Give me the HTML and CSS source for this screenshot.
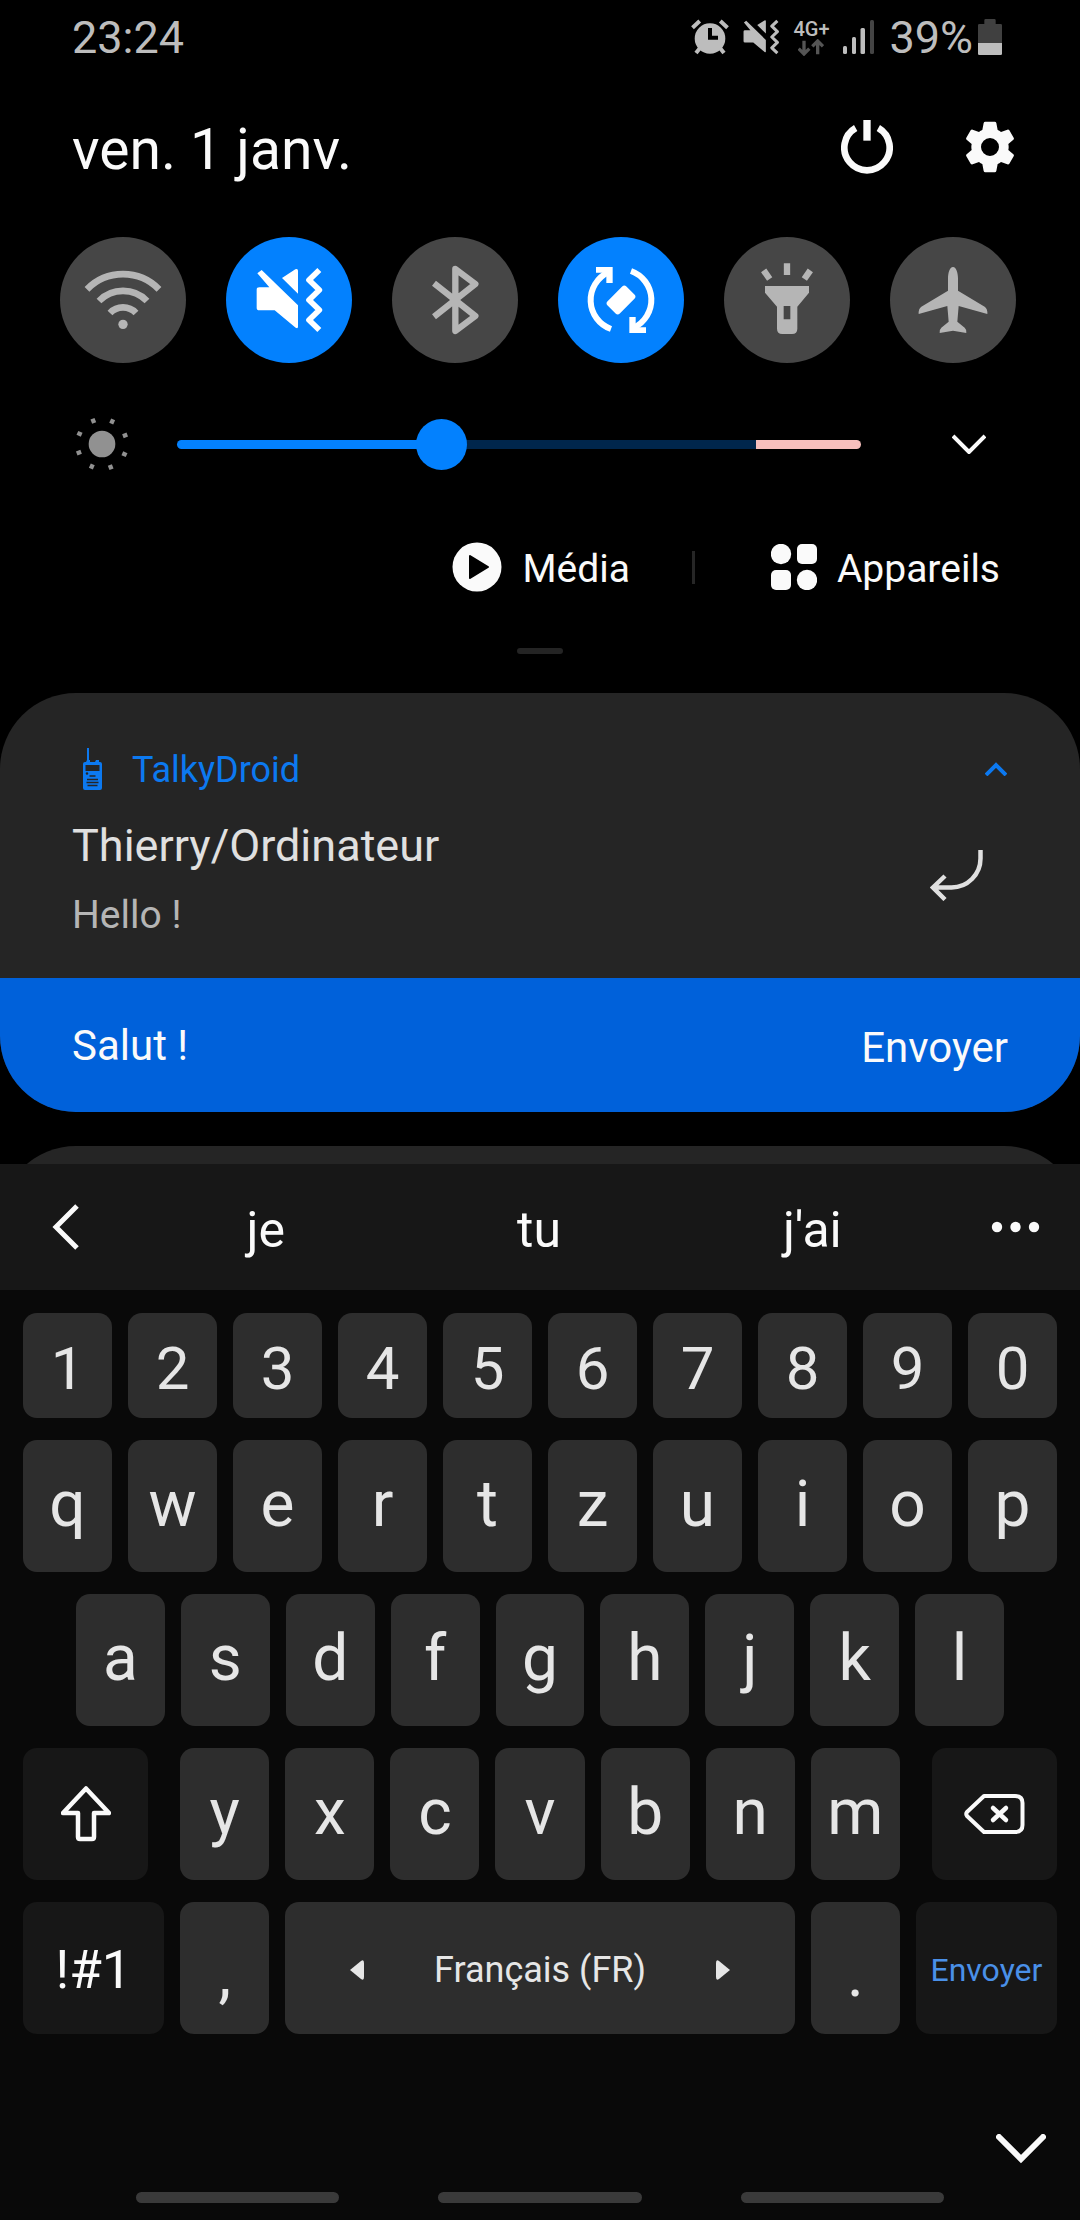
FILE: index.html
```html
<!DOCTYPE html>
<html lang="fr">
<head>
<meta charset="utf-8">
<meta name="viewport" content="width=device-width, initial-scale=1">
<title>Notifications</title>
<link rel="stylesheet" href="styles.css">
</head>
<body>
<header class="status-bar">
  <time class="clock">23:24</time>
  <div class="status-icons">
    <svg width="38" height="36" viewBox="0 0 38 36" fill="none" stroke="currentColor" stroke-width="4" aria-hidden="true"><circle cx="19" cy="19.5" r="15.3" fill="currentColor" stroke="none"/><path d="M1.5 8.7 8.7 2M29.3 2l7.2 6.7M5 34l4-5M33 34l-4-5"/><path d="M19 9v9.700h8" stroke="#000"/></svg>
    <svg width="36" height="36" viewBox="0 0 200 200" aria-hidden="true"><use href="#mute"/></svg>
    <div class="network">
      <span>4G+</span>
      <svg width="26" height="17" viewBox="0 0 78 51" fill="none" stroke="#555" stroke-width="10" aria-hidden="true"><path d="M18 5v40M2 29l16 16 16-16M59 46V7M43 22 59 6l16 16"/></svg>
    </div>
    <svg width="32" height="34" viewBox="0 0 32 34" fill="currentColor" aria-hidden="true"><rect y="26" width="4" height="8" rx="1.500"/><rect x="9" y="17" width="4" height="17" rx="1.500"/><rect x="17.500" y="8" width="4.500" height="26" rx="1.500"/><rect x="27" width="4" height="34" rx="1.500" fill="#444"/></svg>
    <div class="battery">
      <span>39%</span>
      <svg width="24" height="36" viewBox="0 0 72 108" aria-hidden="true"><path d="M19 15V4q0-4 4-4h26q4 0 4 4v11h15q4 0 4 4v53H0V19q0-4 4-4z" fill="#404040"/><path d="M0 72h72v32q0 4-4 4H4q-4 0-4-4z" fill="currentColor"/></svg>
    </div>
  </div>
</header>

<main>
  <section class="panel">
    <div class="panel-head">
      <h1>ven. 1 janv.</h1>
      <button type="button" aria-label="Éteindre"><svg width="52" height="54" viewBox="0 0 156 162"><path d="M44 24A68 68 0 1 0 112 24" fill="none" stroke="currentColor" stroke-width="20"/><path d="M67 0h22v62H67z" fill="currentColor"/></svg></button>
      <button type="button" aria-label="Paramètres"><svg width="48" height="52" viewBox="0 0 144 152"><path fill="currentColor" fill-rule="evenodd" d="M58 0H86Q90 0 91 4L95 25Q100 27 105 31L124 24Q128 23 130 26L143 48Q145 52 142 54L127 67Q128 72 128 76Q128 80 127 85L142 98Q145 100 143 104L130 126Q128 129 124 128L105 121Q100 125 95 127L91 148Q90 152 86 152H58Q54 152 53 148L49 127Q44 125 39 121L20 128Q16 129 14 126L1 104Q-1 100 2 98L17 85Q16 80 16 76Q16 72 17 67L2 54Q-1 52 1 48L14 26Q16 23 20 24L39 31Q44 27 49 25L53 4Q54 0 58 0ZM72 49A27 27 0 1 0 72 103A27 27 0 1 0 72 49Z"/></svg></button>
    </div>

    <div class="toggles">
      <button type="button" class="toggle" aria-label="Wi-Fi" aria-pressed="false"><svg viewBox="0 0 240 240" fill="none" stroke="currentColor" stroke-width="20"><path d="M12 88A151 151 0 0 1 228 88M48 123A101 101 0 0 1 192 123M81 159A54 54 0 0 1 159 159"/><circle cx="120" cy="193" r="14" fill="currentColor" stroke="none"/></svg></button>
      <button type="button" class="toggle" aria-label="Vibreur" aria-pressed="true"><svg viewBox="-20 -20 240 240"><g id="mute"><path fill="currentColor" d="M18 10 127 116V180Q127 187 120 183L57 131H11Q3 131 3 123V69Q3 62 11 62H41L5 20ZM79 34 119 8Q127 5 127 12V81Z"/><path fill="none" stroke="currentColor" stroke-width="17" stroke-linejoin="round" d="M191 10 160 40 191 70 160 100 191 130 160 160 191 190"/></g></svg></button>
      <button type="button" class="toggle" aria-label="Bluetooth" aria-pressed="false"><svg viewBox="0 0 240 240" fill="none" stroke="currentColor" stroke-width="19" stroke-linejoin="round"><path d="M57 70 181 168 121 213V27L181 72 57 170"/></svg></button>
      <button type="button" class="toggle" aria-label="Rotation auto" aria-pressed="true"><svg viewBox="0 0 240 240"><g id="turn"><path d="M90 207A92 92 0 0 1 82 37" fill="none" stroke="currentColor" stroke-width="18"/><path d="M45 21h50v48H76V38H45z" fill="currentColor"/></g><use href="#turn" transform="rotate(180 120 120)"/><rect x="80" y="94" width="80" height="52" rx="9" fill="currentColor" transform="rotate(-45 120 120)"/></svg></button>
      <button type="button" class="toggle" aria-label="Lampe torche" aria-pressed="false"><svg viewBox="0 0 240 240" fill="currentColor"><path fill-rule="evenodd" d="M54 78H186V98L151 140V206Q151 222 135 222H106Q90 222 90 206V140L54 98ZM110 138V178H130V138Z"/><path d="M120 10V45M50 31 68 57M190 31 172 57" stroke="currentColor" stroke-width="19"/></svg></button>
      <button type="button" class="toggle" aria-label="Mode avion" aria-pressed="false"><svg viewBox="0 0 240 240" fill="currentColor"><path d="M120 21C110 21 105 40 105 55V92L25 140Q16 146 17 162L103 138 107 185 85 203Q79 208 80 219L120 212 160 219Q161 208 155 203L133 185 137 138 223 162Q224 146 215 140L135 92V55C135 40 130 21 120 21Z"/></svg></button>
    </div>

    <div class="brightness">
      <svg class="sun" width="54" height="54" viewBox="-81 -81 162 162" fill="currentColor" aria-hidden="true"><circle r="40"/><g id="rays"><path id="ray" d="M-6-81H7V-67H-6z" transform="rotate(24)"/><use href="#ray" transform="rotate(45)"/><use href="#ray" transform="rotate(90)"/><use href="#ray" transform="rotate(135)"/></g><use href="#rays" transform="rotate(180)"/></svg>
      <input type="range" min="0" max="1000" value="378" aria-label="Luminosité">
      <button type="button" aria-label="Options de luminosité"><svg width="34" height="20" viewBox="0 0 34 20" fill="none" stroke="currentColor" stroke-width="4"><path d="M1 2 17 18 33 2"/></svg></button>
    </div>

    <div class="shortcuts">
      <button type="button" class="shortcut"><svg width="50" height="50" viewBox="0 0 50 50" aria-hidden="true"><circle cx="25" cy="25" r="24.500" fill="currentColor"/><path d="M18 14 36 25 18 36z" stroke="#000" stroke-width="2" stroke-linejoin="round"/></svg><span>Média</span></button>
      <span class="divider"></span>
      <button type="button" class="shortcut"><svg width="46" height="46" viewBox="0 0 46 46" fill="currentColor" aria-hidden="true"><circle cx="10" cy="10" r="10.200"/><rect x="26" width="20" height="20" rx="5"/><rect y="26" width="20" height="20" rx="5"/><circle cx="36" cy="36" r="10.200"/></svg><span>Appareils</span></button>
    </div>
    <div class="handle"></div>
  </section>

  <article class="card">
    <div class="card-body">
      <div class="card-app">
        <svg width="20" height="42" viewBox="0 0 20 42" fill="currentColor" aria-hidden="true"><path d="M4 0h2v12h1v2h5l1-2h3v2h1q2 0 2 2v24q0 2-2 2H2q-2 0-2-2V16q0-2 2-2h1l1-2z"/><path d="M2.500 17h14v6h-14z" fill="#252525"/><circle cx="4" cy="25.500" r="1.200" fill="#252525"/><path d="M6.500 28h6M4 31.500h11M3.500 34.500h12M4.500 37.500h10" fill="none" stroke="#252525" stroke-width="1.500"/></svg>
        <span>TalkyDroid</span>
        <button type="button" aria-label="Réduire"><svg width="22" height="14" viewBox="0 0 22 14" fill="none" stroke="currentColor" stroke-width="4"><path d="M1 13 11 3 21 13"/></svg></button>
      </div>
      <div class="message">
        <div>
          <h2>Thierry/Ordinateur</h2>
          <p>Hello !</p>
        </div>
        <button type="button" aria-label="Répondre"><svg width="53" height="51" viewBox="0 0 53 51" fill="none" stroke="currentColor" stroke-width="4.500"><path d="M50.500 0V8.500A29 29 0 0 1 21.500 37.500H4M15 26 3 37.500 15 49.500"/></svg></button>
      </div>
    </div>
    <form class="reply">
      <input type="text" value="Salut !" aria-label="Réponse">
      <button type="button">Envoyer</button>
    </form>
  </article>
  <div class="next"><article class="next-card"></article></div>
</main>

<section class="keyboard">
  <div class="suggestions">
    <button type="button" aria-label="Retour"><svg width="27" height="46" viewBox="0 0 27 46" fill="none" stroke="currentColor" stroke-width="5"><path d="M25 2 4 23 25 44"/></svg></button>
    <div class="words">
      <button type="button">je</button>
      <button type="button">tu</button>
      <button type="button">j'ai</button>
    </div>
    <button type="button" aria-label="Plus"><svg width="49" height="12" viewBox="0 0 49 12" fill="currentColor"><circle cx="6" cy="6" r="5.200"/><circle cx="24.500" cy="6" r="5.200"/><circle cx="43" cy="6" r="5.200"/></svg></button>
  </div>

  <div class="keys">
    <div class="row digits">
      <button type="button">1</button><button type="button">2</button><button type="button">3</button><button type="button">4</button><button type="button">5</button><button type="button">6</button><button type="button">7</button><button type="button">8</button><button type="button">9</button><button type="button">0</button>
    </div>
    <div class="row">
      <button type="button">q</button><button type="button">w</button><button type="button">e</button><button type="button">r</button><button type="button">t</button><button type="button">z</button><button type="button">u</button><button type="button">i</button><button type="button">o</button><button type="button">p</button>
    </div>
    <div class="row inset">
      <button type="button">a</button><button type="button">s</button><button type="button">d</button><button type="button">f</button><button type="button">g</button><button type="button">h</button><button type="button">j</button><button type="button">k</button><button type="button">l</button>
    </div>
    <div class="row">
      <button type="button" class="fn shift" aria-label="Majuscule"><svg width="50" height="56" viewBox="0 0 50 56" fill="none" stroke="currentColor" stroke-width="4.500" stroke-linejoin="round"><path d="M25 2.500 48 27H33V51Q33 53 31 53H19Q17 53 17 51V27H2Z"/></svg></button>
      <button type="button">y</button><button type="button">x</button><button type="button">c</button><button type="button">v</button><button type="button">b</button><button type="button">n</button><button type="button">m</button>
      <button type="button" class="fn delete" aria-label="Effacer"><svg width="61" height="40" viewBox="0 0 61 40" fill="none" stroke="currentColor" stroke-width="4"><path d="M20 2H51Q58.500 2 58.500 9V31Q58.500 38 51 38H20L3 22Q1.500 20 3 18Z" stroke-linejoin="round"/><path d="M29 14 42 26M42 14 29 26" stroke-width="4.500" stroke-linecap="round"/></svg></button>
    </div>
    <div class="row">
      <button type="button" class="fn wide symbols">!#1</button>
      <button type="button" class="point">,</button>
      <button type="button" class="space"><svg width="14" height="20" viewBox="0 0 14 20" fill="currentColor" aria-hidden="true"><path d="M0 10 11 1Q14-1 14 3V17Q14 21 11 19z"/></svg><span>Français (FR)</span><svg width="14" height="20" viewBox="0 0 14 20" fill="currentColor" aria-hidden="true"><path d="M14 10 3 1Q0-1 0 3V17Q0 21 3 19z"/></svg></button>
      <button type="button" class="point">.</button>
      <button type="button" class="fn wide send">Envoyer</button>
    </div>
  </div>

  <button type="button" class="hide" aria-label="Masquer le clavier"><svg width="50" height="30" viewBox="0 0 50 30" fill="none" stroke="currentColor" stroke-width="6" stroke-linecap="round"><path d="M3 3 25 25 47 3"/></svg></button>
  <nav class="nav-bar">
    <button type="button" aria-label="Applications récentes"></button>
    <button type="button" aria-label="Accueil"></button>
    <button type="button" aria-label="Précédent"></button>
  </nav>
</section>
</body>
</html>
```

FILE: styles.css
```css
* {
  box-sizing: border-box;
}

body {
  margin: 0;
  min-height: 100vh;
  display: flex;
  flex-direction: column;
  background: #000;
  color: #fafafa;
  font-family: Roboto, sans-serif;
}

h1,
h2,
p {
  margin: 0;
  font-weight: 400;
}

button,
input {
  margin: 0;
  padding: 0;
  border: 0;
  background: none;
  color: inherit;
  font: inherit;
}

svg {
  display: block;
  flex: none;
}

/* Status bar */
.status-bar {
  display: flex;
  justify-content: space-between;
  align-items: center;
  height: 74px;
  padding: 0 78px 0 72px;
  color: #bdbdbd;
  font-size: 45px;
}

.status-icons {
  display: flex;
  align-items: center;
  gap: 14px;
}

.network {
  display: flex;
  flex-direction: column;
  align-items: center;
  width: 36px;
  font-size: 20px;
  font-weight: 500;
  line-height: 20px;
}

.battery {
  display: flex;
  align-items: center;
  gap: 5px;
}

/* Quick settings */
.panel {
  display: flex;
  flex-direction: column;
}

.panel-head {
  display: flex;
  align-items: center;
  gap: 73px;
  height: 72px;
  margin-top: 37px;
  padding: 0 66px 0 72px;
}

.panel-head h1 {
  flex: 1;
  padding-top: 4px;
  font-size: 57px;
}

.toggles {
  display: flex;
  justify-content: space-between;
  margin-top: 54px;
  padding: 0 64px 0 60px;
}

.toggle {
  display: grid;
  place-items: center;
  width: 126px;
  height: 126px;
  border-radius: 50%;
  background: #464646;
  color: #b5b5b5;
}

.toggle svg {
  width: 80px;
  height: 80px;
}

.toggle[aria-pressed="true"] {
  background: #0381fe;
  color: #fff;
}

.brightness {
  display: flex;
  align-items: center;
  height: 54px;
  margin-top: 54px;
  padding: 0 94px 0 75px;
}

.sun {
  color: #919191;
}

.brightness input {
  flex: 1;
  min-width: 0;
  height: 51px;
  margin: 0 91px 0 48px;
  appearance: none;
}

.brightness input::-webkit-slider-runnable-track {
  height: 9px;
  border-radius: 5px;
  background: linear-gradient(to right, #0381fe 38%, #00264c 38%, #00264c 84.6%, #f7bfbd 84.6%);
}

.brightness input::-webkit-slider-thumb {
  appearance: none;
  width: 51px;
  height: 51px;
  margin-top: -21px;
  border-radius: 50%;
  background: #0381fe;
}

.shortcuts {
  display: flex;
  justify-content: flex-end;
  align-items: center;
  height: 50px;
  margin-top: 71px;
  padding-right: 80px;
}

.shortcut {
  display: flex;
  align-items: center;
  gap: 20px;
  font-size: 39px;
}

.shortcut span {
  padding-top: 3px;
}

.divider {
  width: 3px;
  height: 33px;
  margin: 0 76px 0 62px;
  background: #262626;
}

.handle {
  align-self: center;
  width: 46px;
  height: 6px;
  margin: 56px 0 39px;
  border-radius: 3px;
  background: #242424;
}

/* Notification */
.card {
  overflow: hidden;
  border-radius: 76px;
  background: #252525;
}

.card-body {
  padding: 54px 73px 40px 72px;
}

.card-app {
  display: flex;
  align-items: center;
  gap: 29px;
  height: 44px;
  padding-left: 11px;
  color: #0c79f0;
  font-size: 36px;
}

.card-app span {
  flex: 1;
  padding-top: 2px;
}

.message {
  display: flex;
  justify-content: space-between;
  align-items: center;
  margin-top: 28px;
  padding-right: 24px;
  color: #e0e0e0;
}

.message h2 {
  font-size: 45px;
  line-height: 54px;
}

.message p {
  margin-top: 19px;
  color: #b5b5b5;
  font-size: 39px;
  line-height: 46px;
}

.message button {
  padding-bottom: 6px;
}

.reply {
  display: flex;
  align-items: center;
  height: 134px;
  padding: 0 72px;
  background: #0061da;
  font-size: 42px;
}

.reply input {
  flex: 1;
  min-width: 0;
  outline: 0;
}

.reply button {
  padding-top: 4px;
}

.next {
  height: 18px;
  margin-top: 34px;
  overflow: hidden;
}

.next-card {
  height: 152px;
  border-radius: 76px;
  background: #252525;
}

/* Keyboard */
.keyboard {
  flex: 1;
  display: flex;
  flex-direction: column;
  background: #090909;
}

.suggestions {
  display: flex;
  align-items: center;
  height: 126px;
  padding: 0 40px 0 52px;
  background: #171717;
}

.words {
  flex: 1;
  display: grid;
  grid-template-columns: repeat(3, 1fr);
  padding: 6px 42px 0 50px;
  font-size: 50px;
}

.keys {
  display: flex;
  flex-direction: column;
  gap: 22px;
  padding: 23px 23px 0;
}

.row {
  display: flex;
  gap: 16px;
  height: 132px;
}

.row button {
  flex: 89 1 0;
  min-width: 0;
  padding-bottom: 4px;
  border-radius: 14px;
  background: #2d2d2d;
  color: #e6e6e6;
  font-size: 64px;
}

.digits {
  height: 105px;
}

.digits button {
  padding: 6px 0 0;
  font-size: 60px;
}

.inset {
  padding: 0 53px;
}

.row .fn {
  display: grid;
  place-items: center;
  flex-grow: 125;
  padding: 0;
  background: #171717;
  color: #fafafa;
}

.row .shift {
  margin-right: 16px;
}

.row .delete {
  margin-left: 16px;
}

.row .wide {
  flex-grow: 141;
  padding-top: 4px;
}

.row .symbols {
  font-size: 53px;
}

.row .send {
  color: #4a90e8;
  font-size: 32px;
}

.row .point {
  padding: 12px 0 0;
}

.row .space {
  display: flex;
  justify-content: center;
  align-items: center;
  gap: 70px;
  flex-grow: 509;
  padding: 4px 0 0;
  font-size: 36px;
}

.hide {
  align-self: flex-end;
  margin: 100px 34px 28px 0;
}

.nav-bar {
  display: flex;
  gap: 99px;
  padding: 0 136px 17px;
}

.nav-bar button {
  flex: 1;
  height: 11px;
  border-radius: 6px;
  background: #3a3a3a;
}
```
